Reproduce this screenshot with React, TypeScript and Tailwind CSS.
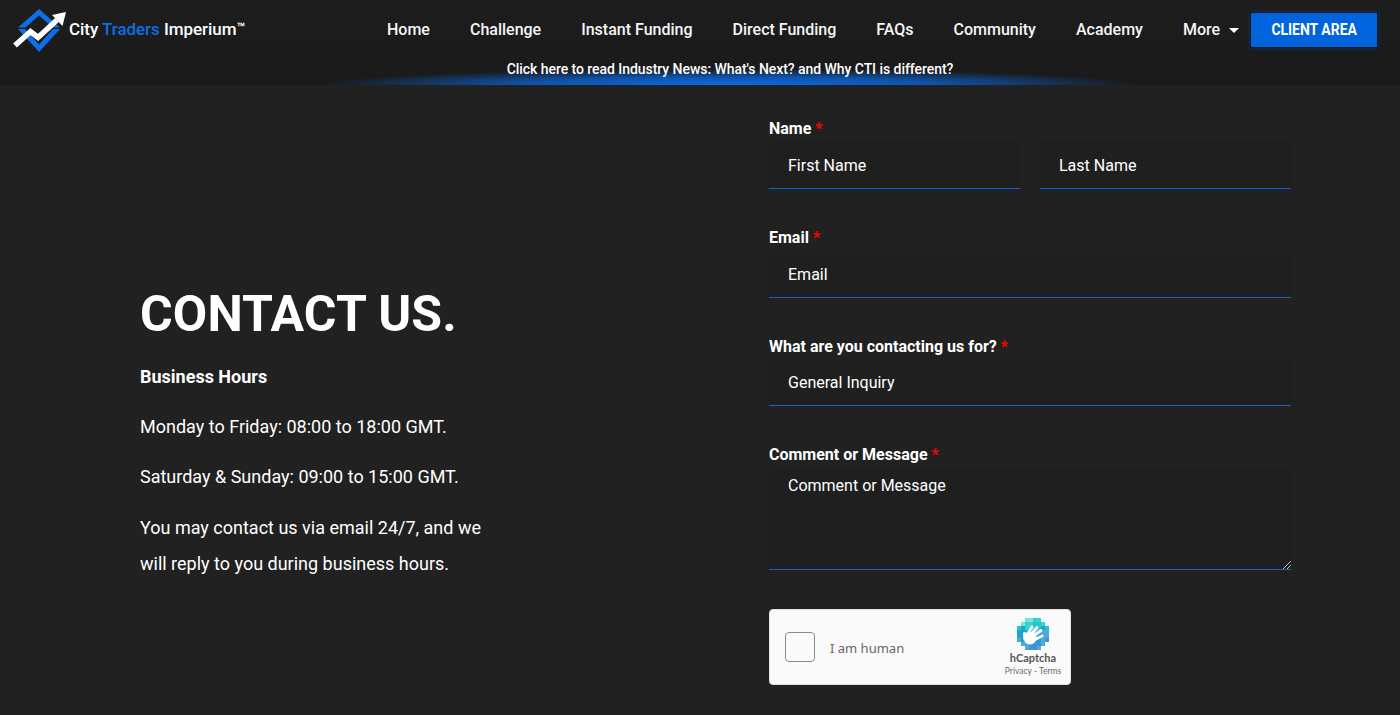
import React from "react";

const nav = ["Home", "Challenge", "Instant Funding", "Direct Funding", "FAQs", "Community", "Academy"];

function Logo() {
  return (
    <svg width="56" height="50" viewBox="12 5 56 50" className="shrink-0">
      <polygon points="18,27.5 39,9 60,27.5 52.5,27.5 39,15.5 25.5,27.5" fill="#0a6fe8" />
      <polygon points="18,29 25,29 39,44.5 53,29 60,29 39,52" fill="#0a6fe8" />
      <polyline points="15,45.5 30.5,31.5 38,37.5 57,20" stroke="#ffffff" strokeWidth="5.5" fill="none" />
      <polygon points="52,15 66,12 62.5,26" fill="#ffffff" />
    </svg>
  );
}

function HCaptcha() {
  const cells: [number, number, string][] = [];
  const map = [
    "..aabb..",
    ".abbccb.",
    "cdbbccdc",
    "ddddddee",
    "ddddddee",
    "edddddef",
    ".eefffe.",
    "..effe..",
  ];
  const col: Record<string, string> = {
    a: "#7fe3da",
    b: "#2fd6cf",
    c: "#27c4c9",
    d: "#1aa5c9",
    e: "#4fa9d9",
    f: "#3f93d3",
  };
  map.forEach((r, y) =>
    r.split("").forEach((c, x) => {
      if (c !== ".") cells.push([x, y, col[c]]);
    })
  );
  return (
    <svg width="32" height="32" viewBox="0 0 32 32">
      {cells.map(([x, y, c]) => (
        <rect key={`${x}-${y}`} x={x * 4} y={y * 4} width="4" height="4" fill={c} />
      ))}
      <circle cx="13" cy="20" r="6.5" fill="#fff" />
      <g stroke="#fff" strokeWidth="3" strokeLinecap="round">
        <line x1="10" y1="17" x2="15" y2="9" />
        <line x1="13" y1="18" x2="20" y2="9.5" />
        <line x1="15" y1="19" x2="24" y2="12.5" />
        <line x1="17" y1="22" x2="25" y2="18" />
        <line x1="8" y1="21" x2="7.5" y2="15.5" />
      </g>
    </svg>
  );
}

function Label({ text }: { text: string }) {
  return (
    <div className="text-[16px] leading-[24px] font-bold text-white">
      {text} <span className="text-[#ff0000]">*</span>
    </div>
  );
}

function Field({ text, blue, className = "" }: { text: string; blue?: boolean; className?: string }) {
  return (
    <div
      className={`flex items-center pl-[19px] text-[16px] text-white bg-[#1f1f1f] border-b ${
        blue ? "border-[#0a64d8]" : "border-[#1a62bc]"
      } ${className}`}
    >
      {text}
    </div>
  );
}

export default function App() {
  return (
    <div className="w-[1400px] h-[715px] overflow-hidden bg-[#212121] text-white font-['Roboto',sans-serif]">
      <header className="relative h-[85px] bg-[linear-gradient(#1d1d1d,#1a1a1a)]">
        <div className="flex items-start">
          <div className="flex items-center pl-[12px] pt-[5px] w-[350px]">
            <Logo />
            <span className="ml-[1px] text-[17px] font-medium mt-[-1px] tracking-[-0.05px] whitespace-nowrap">
              City <span className="text-[#0a6fe8]">Traders</span> Imperium
              <span className="text-[13px] font-bold align-[3px]">™</span>
            </span>
          </div>
          <nav className="flex items-center gap-[40px] pl-[37px] h-[59px] text-[16px] font-medium text-[#f5f5f5]">
            {nav.map((n) => (
              <span key={n}>{n}</span>
            ))}
            <span className="flex items-center gap-[9px]">
              More
              <span className="w-0 h-0 border-l-[5px] border-r-[5px] border-t-[5px] border-l-transparent border-r-transparent border-t-white mt-[2px]" />
            </span>
          </nav>
          <div className="ml-[11px] mt-[12px] w-[128px] h-[36px] bg-[#0064dc] border border-[#101820] flex items-center justify-center text-[17px] font-bold shadow-[0_0_4px_rgba(0,100,220,0.4)]">
            <span className="inline-block scale-x-[0.82] whitespace-nowrap">CLIENT AREA</span>
          </div>
        </div>
        <div className="absolute left-[320px] bottom-0 w-[820px] h-[16px] bg-[radial-gradient(ellipse_50%_100%_at_50%_100%,#0a6ce8_0%,rgba(10,102,220,0.75)_50%,rgba(10,102,220,0)_100%)]" />
        <div className="absolute left-0 right-0 top-[60px] text-center text-[14px] leading-[18px] font-medium tracking-[-0.05px] ml-[60px]">
          Click here to read Industry News: What's Next? and Why CTI is different?
        </div>
      </header>

      <main className="flex">
        <section className="w-[769px] pl-[140px] pt-[198px]">
          <h1 className="text-[50px] leading-[62px] font-bold tracking-[0.1px]">CONTACT US.</h1>
          <div className="mt-[18px] text-[18px] leading-[27px]">
            <p className="font-bold">Business Hours</p>
            <p className="mt-[23px]">Monday to Friday: 08:00 to 18:00 GMT.</p>
            <p className="mt-[23px]">Saturday &amp; Sunday: 09:00 to 15:00 GMT.</p>
            <p className="mt-[20px] leading-[36px] w-[360px]">
              You may contact us via email 24/7, and we will reply to you during business hours.
            </p>
          </div>
        </section>
        <section className="w-[522px] pt-[32px]">
          <Label text="Name" />
          <div className="flex gap-[20px]">
            <Field text="First Name" blue className="h-[48px] pt-[2px] w-[251px]" />
            <Field text="Last Name" blue className="h-[48px] pt-[2px] w-[251px]" />
          </div>
          <div className="mt-[37px]">
            <Label text="Email" />
            <Field text="Email" className="h-[48px] pt-[2px]" />
          </div>
          <div className="mt-[37px]">
            <Label text="What are you contacting us for?" />
            <Field text="General Inquiry" className="h-[47px] pt-[2px]" />
          </div>
          <div className="mt-[37px]">
            <Label text="Comment or Message" />
            <div className="relative h-[103px] pl-[19px] pt-[7px] text-[16px] leading-[24px] bg-[#1f1f1f] border-b border-[#1a62bc]">
              Comment or Message
              <svg width="9" height="9" viewBox="0 0 9 9" className="absolute right-0 bottom-0">
                <path d="M1 9 L9 1 M5 9 L9 5" stroke="#bdbdbd" strokeWidth="1" />
              </svg>
            </div>
          </div>
          <div className="mt-[39px] w-[302px] h-[76px] rounded-[4px] bg-[#fafafa] border border-[#e0e0e0] flex items-center pl-[15px] font-['Lato',sans-serif]">
            <div className="w-[30px] h-[30px] rounded-[4px] border border-[#8a8a8a] bg-[#fafafa]" />
            <span className="ml-[15px] mt-[3px] text-[13px] text-[#666666] font-['Noto_Sans',sans-serif]">I am human</span>
            <div className="ml-auto mr-[11px] flex flex-col items-center w-[52px]">
              <HCaptcha />
              <span className="text-[11px] leading-[12px] mt-[2px] font-bold text-[#555555]">hCaptcha</span>
              <span className="text-[8.5px] leading-[10px] mt-[2px] text-[#6b6b6b] whitespace-nowrap">Privacy - Terms</span>
            </div>
          </div>
        </section>
      </main>
    </div>
  );
}
